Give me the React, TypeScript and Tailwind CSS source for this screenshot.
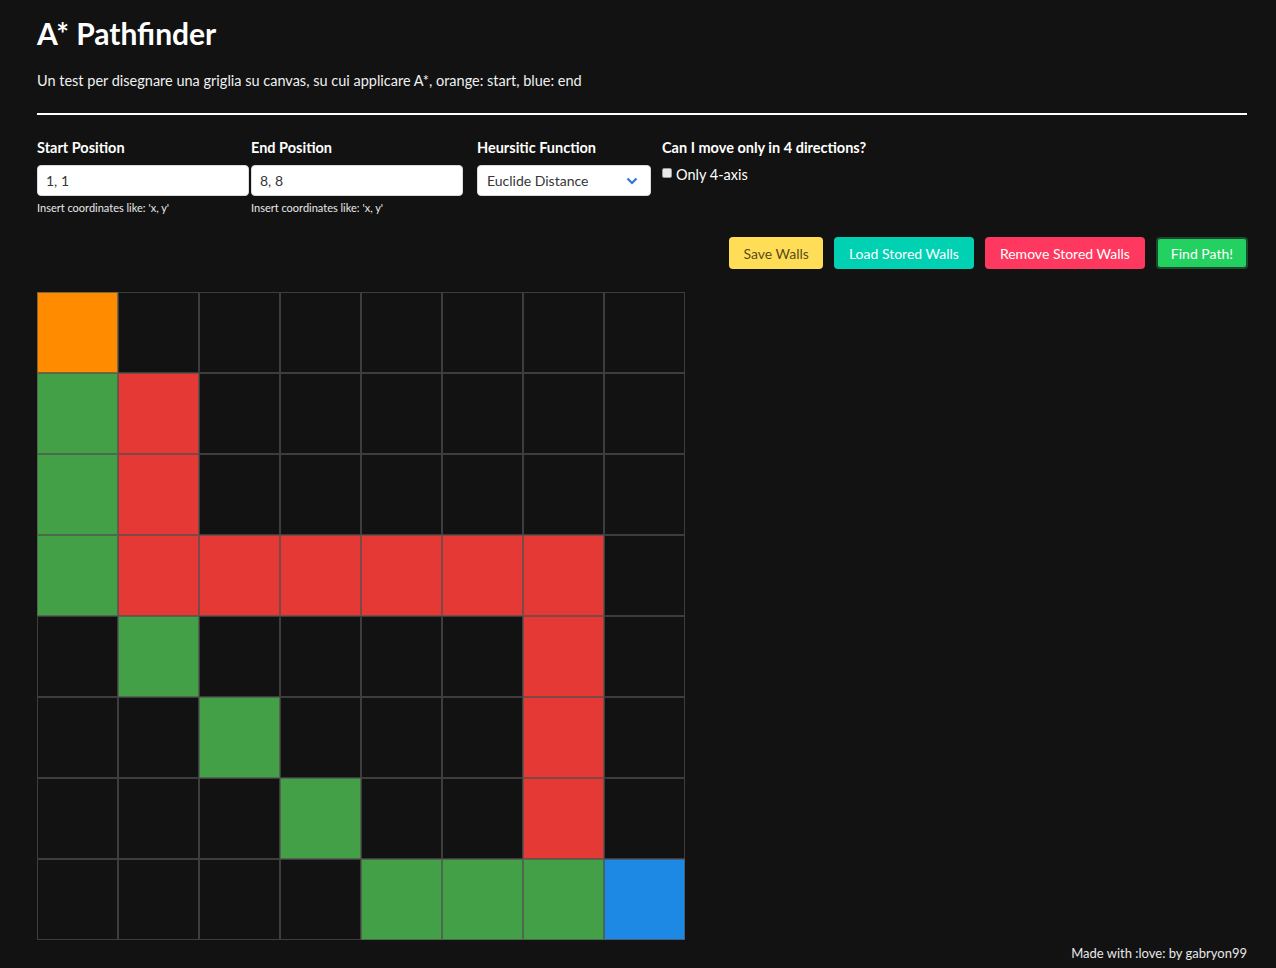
import React from "react";

type Cell = "start" | "end" | "wall" | "path" | "empty";

// 8x8 board, row by row
const BOARD: string[] = [
  "S.......",
  "PW......",
  "PW......",
  "PWWWWWW.",
  ".P....W.",
  "..P...W.",
  "...P..W.",
  "....PPPE",
];

const CELL_BG: Record<Cell, string> = {
  start: "bg-[#ff8c00]",
  end: "bg-[#1e88e5]",
  wall: "bg-[#e53935]",
  path: "bg-[#43a047]",
  empty: "bg-[#121212]",
};

function toCell(ch: string): Cell {
  if (ch === "S") return "start";
  if (ch === "E") return "end";
  if (ch === "W") return "wall";
  if (ch === "P") return "path";
  return "empty";
}

function Field({ label, value, help }: { label: string; value: string; help: string }) {
  return (
    <div className="flex w-[212px] flex-col">
      <label className="text-[14.5px] font-bold leading-[20px] text-white">{label}</label>
      <input
        readOnly
        value={value}
        className="mt-[7px] h-[31px] w-full rounded-[4px] border border-[#dbdbdb] bg-white px-[8px] text-[14px] text-[#363636] outline-none"
      />
      <p className="mt-[5px] text-[11px] leading-[14px] text-[#e8e8e8]">{help}</p>
    </div>
  );
}

export default function App() {
  return (
    <div
      className="min-h-[968px] bg-[#121212] pl-[37px] pr-[29px] text-white"
      style={{ fontFamily: "Lato, 'Open Sans', sans-serif" }}
    >
      <h1 className="pt-[15px] text-[30px] font-bold leading-[36px]">A* Pathfinder</h1>
      <p className="mt-[20px] text-[14.5px] leading-[20px] text-[#f0f0f0]">
        Un test per disegnare una griglia su canvas, su cui applicare A*, orange: start, blue: end
      </p>
      <hr className="mt-[22px] border-t-2 border-white" />

      <div className="mt-[23px] flex items-start">
        <Field label="Start Position" value="1, 1" help="Insert coordinates like: 'x, y'" />
        <div className="ml-[2px]">
          <Field label="End Position" value="8, 8" help="Insert coordinates like: 'x, y'" />
        </div>
        <div className="ml-[14px] flex w-[174px] flex-col">
          <label className="text-[14.5px] font-bold leading-[20px] text-white">Heursitic Function</label>
          <div className="mt-[7px] flex h-[31px] items-center justify-between rounded-[4px] border border-[#dbdbdb] bg-white pl-[9px] pr-[12px] text-[14px] text-[#363636]">
            <span>Euclide Distance</span>
            <svg width="12" height="8" viewBox="0 0 12 8" fill="none">
              <path d="M1.5 1.5 L6 6 L10.5 1.5" stroke="#3273dc" strokeWidth="2.2" />
            </svg>
          </div>
        </div>
        <div className="ml-[11px] flex flex-col">
          <label className="text-[14.5px] font-bold leading-[20px] text-white">Can I move only in 4 directions?</label>
          <div className="mt-[7px] flex items-start gap-[4px]">
            <span className="mt-[3px] block h-[10px] w-[10px] rounded-[2px] border border-[#999] bg-[#e9e9e9]" />
            <span className="text-[14.5px] leading-[20px] text-white">Only 4-axis</span>
          </div>
        </div>
      </div>

      <div className="mt-[22px] flex justify-end gap-[11px]">
        <button className="h-[32px] rounded-[4px] bg-[#ffdd57] px-[14px] text-[14px] text-[rgba(0,0,0,0.7)]">
          Save Walls
        </button>
        <button className="h-[32px] rounded-[4px] bg-[#00d1b2] px-[15px] text-[14px] text-white">
          Load Stored Walls
        </button>
        <button className="h-[32px] rounded-[4px] bg-[#ff3860] px-[15px] text-[14px] text-white">
          Remove Stored Walls
        </button>
        <button className="-mr-[1px] h-[32px] rounded-[4px] border-2 border-[#1c4a2c] bg-[#23d160] px-[13px] text-[14px] text-white">
          Find Path!
        </button>
      </div>

      <div className="mt-[23px] grid w-[648px] grid-cols-8">
        {BOARD.flatMap((row, r) =>
          row.split("").map((ch, c) => (
            <div
              key={`${r}-${c}`}
              className={`h-[81px] w-[81px] border border-[rgba(80,80,80,0.7)] ${CELL_BG[toCell(ch)]}`}
            />
          )),
        )}
      </div>

      <p className="mt-[5px] text-right text-[13px] leading-[16px] text-[#e8e8e8]">
        Made with :love: by gabryon99
      </p>
    </div>
  );
}
